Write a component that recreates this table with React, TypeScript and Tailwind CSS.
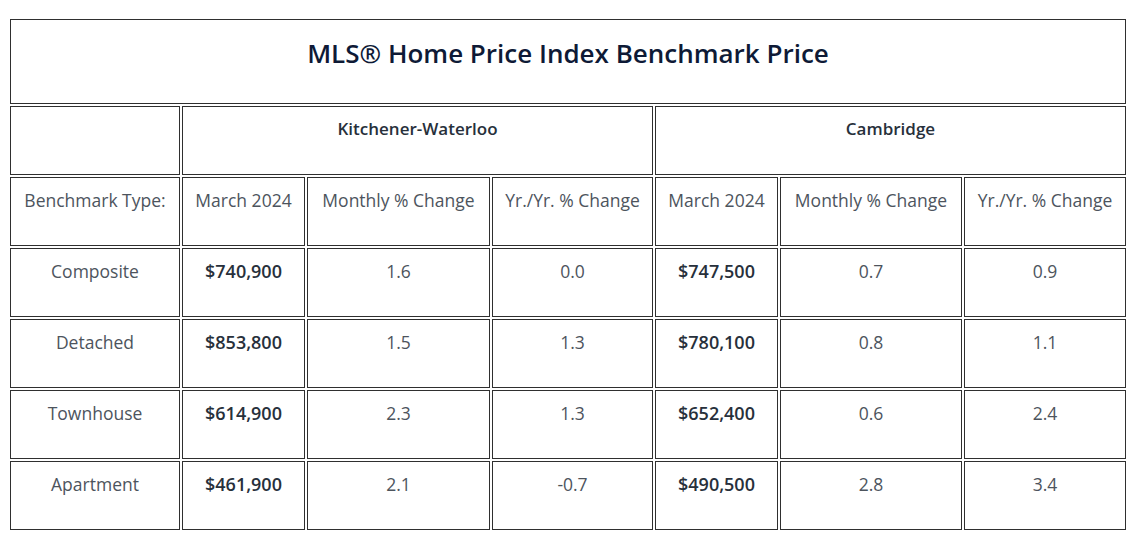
const rows = [
  { type: "Composite", kw: ["$740,900", "1.6", "0.0"], cam: ["$747,500", "0.7", "0.9"] },
  { type: "Detached", kw: ["$853,800", "1.5", "1.3"], cam: ["$780,100", "0.8", "1.1"] },
  { type: "Townhouse", kw: ["$614,900", "2.3", "1.3"], cam: ["$652,400", "0.6", "2.4"] },
  { type: "Apartment", kw: ["$461,900", "2.1", "-0.7"], cam: ["$490,500", "2.8", "3.4"] },
];

const cell = "h-[69px] border border-[#2f2f2f] pt-[10px] text-center leading-[24px]";

type Kind = "text" | "head" | "price";

const kinds: Record<Kind, string> = {
  text: "text-[17.5px] font-normal text-[#4d545d]",
  head: "text-[17px] font-semibold text-[#27303b]",
  price: "text-[18px] font-semibold text-[#27303b]",
};

function Cell({ children, kind = "text", className = "" }: { children?: React.ReactNode; kind?: Kind; className?: string }) {
  return <div className={`${cell} ${kinds[kind]} ${className}`}>{children}</div>;
}

export default function App() {
  return (
    <div className="min-h-[540px] bg-white px-[10px] pt-[19px] font-['Open_Sans',sans-serif]">
      <div className="w-[1116px]">
        <div className="h-[85px] border border-[#2f2f2f] pt-[17px] text-center text-[26px] font-semibold leading-[32px] text-[#0e1a36]">
          MLS® Home Price Index Benchmark Price
        </div>
        <div className="mt-[2px] grid grid-cols-[170px_123px_183px_161px_123px_182px_162px] gap-[2px]">
          <Cell />
          <Cell kind="head" className="col-span-3">
            Kitchener-Waterloo
          </Cell>
          <Cell kind="head" className="col-span-3">
            Cambridge
          </Cell>

          <Cell>Benchmark Type:</Cell>
          <Cell>March 2024</Cell>
          <Cell>Monthly % Change</Cell>
          <Cell>Yr./Yr. % Change</Cell>
          <Cell>March 2024</Cell>
          <Cell>Monthly % Change</Cell>
          <Cell>Yr./Yr. % Change</Cell>

          {rows.map((r) => (
            <>
              <Cell key={r.type}>{r.type}</Cell>
              <Cell kind="price">{r.kw[0]}</Cell>
              <Cell>{r.kw[1]}</Cell>
              <Cell>{r.kw[2]}</Cell>
              <Cell kind="price">{r.cam[0]}</Cell>
              <Cell>{r.cam[1]}</Cell>
              <Cell>{r.cam[2]}</Cell>
            </>
          ))}
        </div>
      </div>
    </div>
  );
}
